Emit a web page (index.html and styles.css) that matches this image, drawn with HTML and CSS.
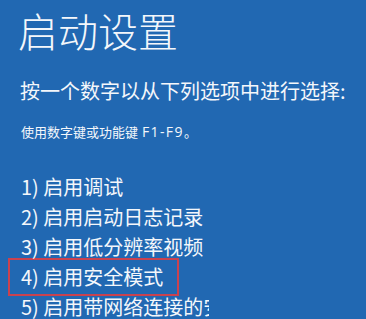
FILE: index.html
```html
<!DOCTYPE html>
<html lang="zh-CN">
<head>
<meta charset="utf-8">
<link rel="stylesheet" href="styles.css">
</head>
<body>
<main class="screen">
  <h1 class="title">启动设置</h1>
  <p class="prompt">按一个数字以从下列选项中进行选择:</p>
  <p class="hint">使用数字键或功能键 <span class="keys">F1-F9</span>。</p>
  <ul class="options">
    <li class="option">1) 启用调试</li>
    <li class="option">2) 启用启动日志记录</li>
    <li class="option">3) 启用低分辨率视频</li>
    <li class="option option-selected">4) 启用安全模式</li>
    <li class="option option-clipped"><span class="clip">5) 启用带网络连接的安全模式</span></li>
  </ul>
</main>
</body>
</html>
```
FILE: styles.css
```css
html, body {
  margin: 0;
  padding: 0;
  background: #2168b2;
}
body {
  width: 366px;
  height: 319px;
  overflow: hidden;
  color: #f4f7fb;
  font-family: "Noto Sans CJK SC", "Noto Sans", sans-serif;
}
.screen {
  padding: 0 0 0 20px;
}
.title {
  margin: 5px 0 0 -2px;
  font-size: 40px;
  font-weight: 300;
  line-height: 50px;
}
.prompt {
  margin: 23px 0 0 0;
  font-size: 20px;
  font-weight: 400;
  line-height: 26px;
}
.hint {
  margin: 19px 0 0 1px;
  font-size: 13px;
  font-weight: 400;
  line-height: 18px;
}
.keys {
  font-family: "Open Sans", "Noto Sans", sans-serif;
  font-size: 14px;
  letter-spacing: 1.4px;
  margin-left: 1px;
}
.options {
  list-style: none;
  margin: 31px 0 0 1px;
  padding: 0;
}
.option {
  font-size: 20px;
  font-weight: 400;
  line-height: 30px;
  white-space: nowrap;
}
.option-selected {
  width: 156px;
  margin: -4px 0 -4px -13px;
  padding: 2px 0 2px 11px;
  border: 2px solid #c9424f;
}
.clip {
  display: inline-block;
  width: 188px;
  overflow: hidden;
  vertical-align: top;
}
```
